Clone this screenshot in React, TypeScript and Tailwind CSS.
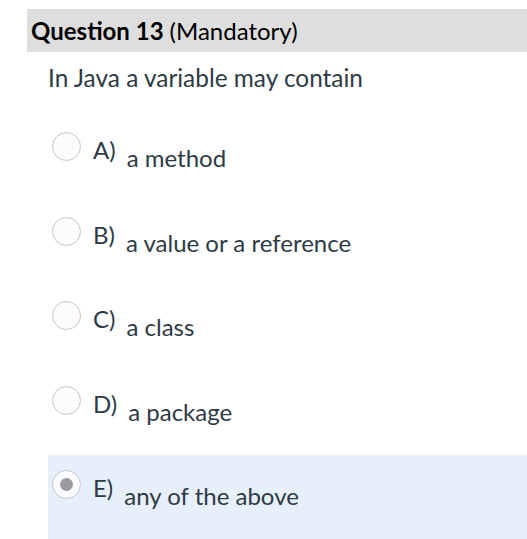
import React from 'react';

const options = [
  { key: 'A)', text: 'a method' },
  { key: 'B)', text: 'a value or a reference' },
  { key: 'C)', text: 'a class' },
  { key: 'D)', text: 'a package' },
  { key: 'E)', text: 'any of the above', selected: true },
];

function Radio({ checked }: { checked?: boolean }) {
  return (
    <span className="flex h-[29px] w-[29px] shrink-0 items-center justify-center rounded-full border border-[#c4c6c9] bg-[#fbfcfe]">
      {checked && <span className="h-[13px] w-[13px] rounded-full bg-[#9a9ca1]" />}
    </span>
  );
}

export default function App() {
  return (
    <div className="min-h-[539px] w-[527px] bg-white font-['Lato',sans-serif] text-[#2d3b45]">
      <div className="pt-[9px] pl-[27px]">
        <div className="flex h-[43px] items-center bg-[#dedede] pl-[4px] text-[24px] text-black">
          <span className="font-bold">Question 13</span>
          <span className="ml-[6px]">(Mandatory)</span>
        </div>
      </div>
      <p className="mt-[12px] pl-[48px] text-[24.4px] leading-[28px]">In Java a variable may contain</p>
      <div className="mt-[25px] pl-[48px]">
        {options.map((o) => (
          <div
            key={o.key}
            className={`flex h-[84.5px] items-start pl-[4px] pt-[15px] ${o.selected ? 'bg-[#e6f0fa]' : ''}`}
          >
            <Radio checked={o.selected} />
            <span className="ml-[12px] mt-[5px] text-[24px] leading-[26px]">{o.key}</span>
            <span className="ml-[11px] mt-[13px] text-[24px] leading-[26px]">{o.text}</span>
          </div>
        ))}
      </div>
    </div>
  );
}
